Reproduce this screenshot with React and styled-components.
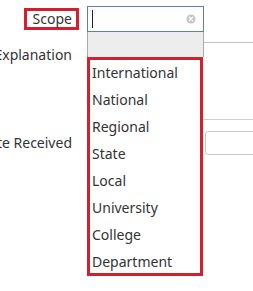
import React from "react";
import styled, { createGlobalStyle } from "styled-components";

const Global = createGlobalStyle`
  html { overflow: hidden; background: #fff; }
  body { margin: 0; padding: 0; background: #fff; font-family: "Noto Sans", "Open Sans", Arial, sans-serif; font-size: 14px; color: #333; }
`;

const Form = styled.div`
  display: grid;
  grid-template-columns: 79px 300px;
  column-gap: 8px;
  padding-top: 6px;
  width: 400px;
  height: 285px;
  align-content: start;
`;

const LabelCell = styled.div`
  display: flex;
  justify-content: flex-end;
  align-items: ${(p) => p.$align || "center"};
  margin-top: ${(p) => p.$mt || 0}px;
  white-space: nowrap;
  min-width: 0;
`;

const Label = styled.span`
  display: block;
  line-height: 16px;
  padding: ${(p) => (p.$marked ? "0 4px 0 6px" : `${p.$pt || 0}px 7px 0 0`)};
  border: ${(p) => (p.$marked ? "3px solid #d4202e" : "none")};
`;

const FieldCell = styled.div`
  position: relative;
  margin-top: ${(p) => p.$mt || 0}px;
  display: flex;
  align-items: center;
`;

const ScopePlaceholder = styled.div`
  height: 26px;
  width: 117px;
`;

const TextArea = styled.div`
  box-sizing: border-box;
  width: 300px;
  height: 78px;
  border: 1px solid #c2c2c2;
  border-bottom-color: #d0d0d0;
`;

const DateRow = styled.div`
  display: flex;
  gap: 5px;
`;

const DateBox = styled.div`
  box-sizing: border-box;
  height: 24px;
  width: ${(p) => p.$w}px;
  border: 1px solid #c8c8c8;
  border-radius: 3px;
  background: #fff;
`;

const Dropdown = styled.div`
  position: absolute;
  left: 0;
  top: 0;
  width: 117px;
  z-index: 5;
  display: flex;
  flex-direction: column;
`;

const SearchBox = styled.div`
  box-sizing: border-box;
  height: 26px;
  border: 1px solid #5b7fba;
  background: #fff;
  display: flex;
  align-items: center;
  justify-content: space-between;
  padding: 0 7px 0 4px;
`;

const Caret = styled.span`
  display: block;
  width: 1px;
  height: 18px;
  background: #222;
`;

const Filler = styled.div`
  height: 25px;
  background: #ededed;
  border-left: 1px solid #aaa;
  border-right: 1px solid #aaa;
`;

const List = styled.ul`
  box-sizing: border-box;
  list-style: none;
  margin: 0;
  padding: 0 0 0 2px;
  height: 219px;
  width: 116px;
  border: 3px solid #d4202e;
  background: #fff;
  overflow: visible;
`;

const Item = styled.li`
  height: 27px;
  line-height: 27px;
  white-space: nowrap;
  color: #333;
  &:first-child { margin-top: -1px; }
`;

const ClearIcon = () => (
  <svg width="10" height="10" viewBox="0 0 10 10">
    <circle cx="5" cy="5" r="4.5" fill="#c4c4c4" />
    <path d="M3.3 3.3 L6.7 6.7 M6.7 3.3 L3.3 6.7" stroke="#fff" strokeWidth="1.3" strokeLinecap="round" />
  </svg>
);

const options = [
  "International",
  "National",
  "Regional",
  "State",
  "Local",
  "University",
  "College",
  "Department",
];

export default function App() {
  return (
    <>
      <Global />
      <Form>
        <LabelCell>
          <Label $marked>Scope</Label>
        </LabelCell>
        <FieldCell>
          <ScopePlaceholder />
          <Dropdown>
            <SearchBox>
              <Caret />
              <ClearIcon />
            </SearchBox>
            <Filler />
            <List>
              {options.map((o) => (
                <Item key={o}>{o}</Item>
              ))}
            </List>
          </Dropdown>
        </FieldCell>

        <LabelCell $mt={10} $align="flex-start">
          <Label $pt={5}>Explanation</Label>
        </LabelCell>
        <FieldCell $mt={10}>
          <TextArea />
        </FieldCell>

        <LabelCell $mt={11}>
          <Label $pt={0}>Date Received</Label>
        </LabelCell>
        <FieldCell $mt={11}>
          <DateRow>
            <DateBox $w={113} />
            <DateBox $w={120} />
          </DateRow>
        </FieldCell>
      </Form>
    </>
  );
}
